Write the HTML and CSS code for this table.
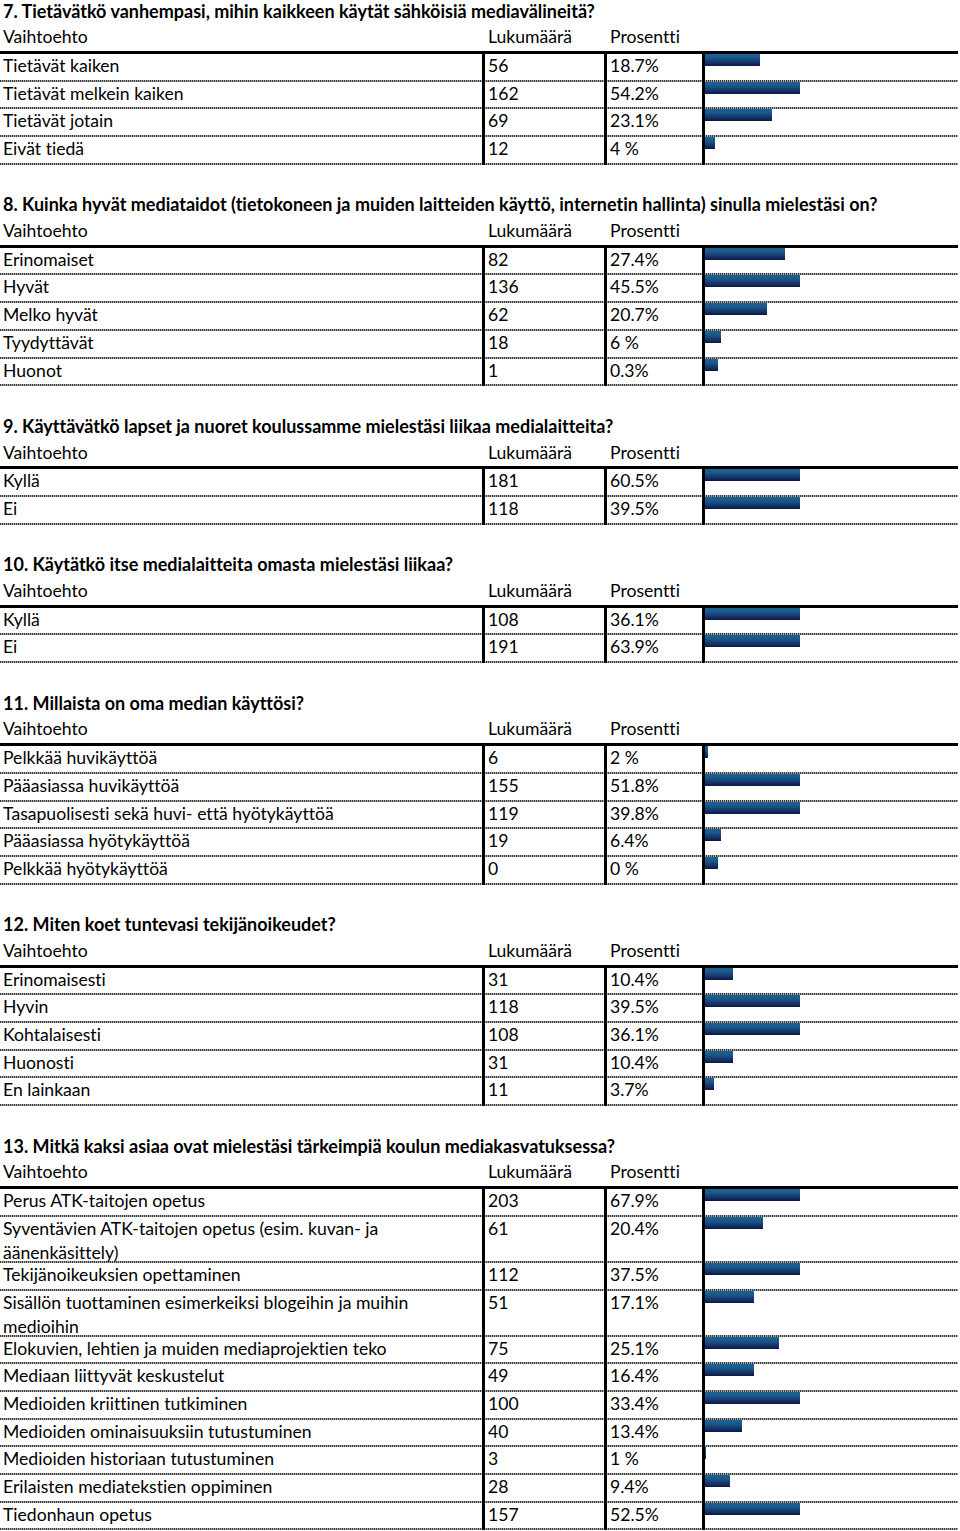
FILE: index.html
```html
<!DOCTYPE html>
<html lang="fi">
<head>
<meta charset="utf-8">
<title>Kyselyn tulokset</title>
<link rel="stylesheet" href="styles.css">
</head>
<body>
<div class="page">

<section class="q">
  <h2 class="q-title">7. Tietävätkö vanhempasi, mihin kaikkeen käytät sähköisiä mediavälineitä?</h2>
  <div class="line head"><span class="c c-label">Vaihtoehto</span><span class="c c-num">Lukumäärä</span><span class="c c-pct">Prosentti</span><span class="c c-bar"></span></div>
  <div class="rows">
    <div class="line row"><span class="c c-label">Tietävät kaiken</span><span class="c c-num">56</span><span class="c c-pct">18.7%</span><span class="c c-bar"><i class="bar" style="width:55px"></i></span></div>
    <div class="line row"><span class="c c-label">Tietävät melkein kaiken</span><span class="c c-num">162</span><span class="c c-pct">54.2%</span><span class="c c-bar"><i class="bar" style="width:95px"></i></span></div>
    <div class="line row"><span class="c c-label">Tietävät jotain</span><span class="c c-num">69</span><span class="c c-pct">23.1%</span><span class="c c-bar"><i class="bar" style="width:67px"></i></span></div>
    <div class="line row"><span class="c c-label">Eivät tiedä</span><span class="c c-num">12</span><span class="c c-pct">4 %</span><span class="c c-bar"><i class="bar" style="width:10px"></i></span></div>
  </div>
</section>

<section class="q">
  <h2 class="q-title">8. Kuinka hyvät mediataidot (tietokoneen ja muiden laitteiden käyttö, internetin hallinta) sinulla mielestäsi on?</h2>
  <div class="line head"><span class="c c-label">Vaihtoehto</span><span class="c c-num">Lukumäärä</span><span class="c c-pct">Prosentti</span><span class="c c-bar"></span></div>
  <div class="rows">
    <div class="line row"><span class="c c-label">Erinomaiset</span><span class="c c-num">82</span><span class="c c-pct">27.4%</span><span class="c c-bar"><i class="bar" style="width:80px"></i></span></div>
    <div class="line row"><span class="c c-label">Hyvät</span><span class="c c-num">136</span><span class="c c-pct">45.5%</span><span class="c c-bar"><i class="bar" style="width:95px"></i></span></div>
    <div class="line row"><span class="c c-label">Melko hyvät</span><span class="c c-num">62</span><span class="c c-pct">20.7%</span><span class="c c-bar"><i class="bar" style="width:62px"></i></span></div>
    <div class="line row"><span class="c c-label">Tyydyttävät</span><span class="c c-num">18</span><span class="c c-pct">6 %</span><span class="c c-bar"><i class="bar" style="width:16px"></i></span></div>
    <div class="line row"><span class="c c-label">Huonot</span><span class="c c-num">1</span><span class="c c-pct">0.3%</span><span class="c c-bar"><i class="bar" style="width:13px"></i></span></div>
  </div>
</section>

<section class="q">
  <h2 class="q-title">9. Käyttävätkö lapset ja nuoret koulussamme mielestäsi liikaa medialaitteita?</h2>
  <div class="line head"><span class="c c-label">Vaihtoehto</span><span class="c c-num">Lukumäärä</span><span class="c c-pct">Prosentti</span><span class="c c-bar"></span></div>
  <div class="rows">
    <div class="line row"><span class="c c-label">Kyllä</span><span class="c c-num">181</span><span class="c c-pct">60.5%</span><span class="c c-bar"><i class="bar" style="width:95px"></i></span></div>
    <div class="line row"><span class="c c-label">Ei</span><span class="c c-num">118</span><span class="c c-pct">39.5%</span><span class="c c-bar"><i class="bar" style="width:95px"></i></span></div>
  </div>
</section>

<section class="q">
  <h2 class="q-title">10. Käytätkö itse medialaitteita omasta mielestäsi liikaa?</h2>
  <div class="line head"><span class="c c-label">Vaihtoehto</span><span class="c c-num">Lukumäärä</span><span class="c c-pct">Prosentti</span><span class="c c-bar"></span></div>
  <div class="rows">
    <div class="line row"><span class="c c-label">Kyllä</span><span class="c c-num">108</span><span class="c c-pct">36.1%</span><span class="c c-bar"><i class="bar" style="width:95px"></i></span></div>
    <div class="line row"><span class="c c-label">Ei</span><span class="c c-num">191</span><span class="c c-pct">63.9%</span><span class="c c-bar"><i class="bar" style="width:95px"></i></span></div>
  </div>
</section>

<section class="q">
  <h2 class="q-title">11. Millaista on oma median käyttösi?</h2>
  <div class="line head"><span class="c c-label">Vaihtoehto</span><span class="c c-num">Lukumäärä</span><span class="c c-pct">Prosentti</span><span class="c c-bar"></span></div>
  <div class="rows">
    <div class="line row"><span class="c c-label">Pelkkää huvikäyttöä</span><span class="c c-num">6</span><span class="c c-pct">2 %</span><span class="c c-bar"><i class="bar" style="width:3px"></i></span></div>
    <div class="line row"><span class="c c-label">Pääasiassa huvikäyttöä</span><span class="c c-num">155</span><span class="c c-pct">51.8%</span><span class="c c-bar"><i class="bar" style="width:95px"></i></span></div>
    <div class="line row"><span class="c c-label">Tasapuolisesti sekä huvi- että hyötykäyttöä</span><span class="c c-num">119</span><span class="c c-pct">39.8%</span><span class="c c-bar"><i class="bar" style="width:95px"></i></span></div>
    <div class="line row"><span class="c c-label">Pääasiassa hyötykäyttöä</span><span class="c c-num">19</span><span class="c c-pct">6.4%</span><span class="c c-bar"><i class="bar" style="width:16px"></i></span></div>
    <div class="line row"><span class="c c-label">Pelkkää hyötykäyttöä</span><span class="c c-num">0</span><span class="c c-pct">0 %</span><span class="c c-bar"><i class="bar" style="width:13px"></i></span></div>
  </div>
</section>

<section class="q">
  <h2 class="q-title">12. Miten koet tuntevasi tekijänoikeudet?</h2>
  <div class="line head"><span class="c c-label">Vaihtoehto</span><span class="c c-num">Lukumäärä</span><span class="c c-pct">Prosentti</span><span class="c c-bar"></span></div>
  <div class="rows">
    <div class="line row"><span class="c c-label">Erinomaisesti</span><span class="c c-num">31</span><span class="c c-pct">10.4%</span><span class="c c-bar"><i class="bar" style="width:28px"></i></span></div>
    <div class="line row"><span class="c c-label">Hyvin</span><span class="c c-num">118</span><span class="c c-pct">39.5%</span><span class="c c-bar"><i class="bar" style="width:95px"></i></span></div>
    <div class="line row"><span class="c c-label">Kohtalaisesti</span><span class="c c-num">108</span><span class="c c-pct">36.1%</span><span class="c c-bar"><i class="bar" style="width:95px"></i></span></div>
    <div class="line row"><span class="c c-label">Huonosti</span><span class="c c-num">31</span><span class="c c-pct">10.4%</span><span class="c c-bar"><i class="bar" style="width:28px"></i></span></div>
    <div class="line row"><span class="c c-label">En lainkaan</span><span class="c c-num">11</span><span class="c c-pct">3.7%</span><span class="c c-bar"><i class="bar" style="width:9px"></i></span></div>
  </div>
</section>

<section class="q">
  <h2 class="q-title">13. Mitkä kaksi asiaa ovat mielestäsi tärkeimpiä koulun mediakasvatuksessa?</h2>
  <div class="line head"><span class="c c-label">Vaihtoehto</span><span class="c c-num">Lukumäärä</span><span class="c c-pct">Prosentti</span><span class="c c-bar"></span></div>
  <div class="rows">
    <div class="line row"><span class="c c-label">Perus ATK-taitojen opetus</span><span class="c c-num">203</span><span class="c c-pct">67.9%</span><span class="c c-bar"><i class="bar" style="width:95px"></i></span></div>
    <div class="line row row--tall"><span class="c c-label">Syventävien ATK-taitojen opetus (esim. kuvan- ja<br>äänenkäsittely)</span><span class="c c-num">61</span><span class="c c-pct">20.4%</span><span class="c c-bar"><i class="bar" style="width:58px"></i></span></div>
    <div class="line row"><span class="c c-label">Tekijänoikeuksien opettaminen</span><span class="c c-num">112</span><span class="c c-pct">37.5%</span><span class="c c-bar"><i class="bar" style="width:95px"></i></span></div>
    <div class="line row row--tall"><span class="c c-label">Sisällön tuottaminen esimerkeiksi blogeihin ja muihin<br>medioihin</span><span class="c c-num">51</span><span class="c c-pct">17.1%</span><span class="c c-bar"><i class="bar" style="width:49px"></i></span></div>
    <div class="line row"><span class="c c-label">Elokuvien, lehtien ja muiden mediaprojektien teko</span><span class="c c-num">75</span><span class="c c-pct">25.1%</span><span class="c c-bar"><i class="bar" style="width:74px"></i></span></div>
    <div class="line row"><span class="c c-label">Mediaan liittyvät keskustelut</span><span class="c c-num">49</span><span class="c c-pct">16.4%</span><span class="c c-bar"><i class="bar" style="width:49px"></i></span></div>
    <div class="line row"><span class="c c-label">Medioiden kriittinen tutkiminen</span><span class="c c-num">100</span><span class="c c-pct">33.4%</span><span class="c c-bar"><i class="bar" style="width:95px"></i></span></div>
    <div class="line row"><span class="c c-label">Medioiden ominaisuuksiin tutustuminen</span><span class="c c-num">40</span><span class="c c-pct">13.4%</span><span class="c c-bar"><i class="bar" style="width:37px"></i></span></div>
    <div class="line row"><span class="c c-label">Medioiden historiaan tutustuminen</span><span class="c c-num">3</span><span class="c c-pct">1 %</span><span class="c c-bar"><i class="bar" style="width:1px"></i></span></div>
    <div class="line row"><span class="c c-label">Erilaisten mediatekstien oppiminen</span><span class="c c-num">28</span><span class="c c-pct">9.4%</span><span class="c c-bar"><i class="bar" style="width:25px"></i></span></div>
    <div class="line row"><span class="c c-label">Tiedonhaun opetus</span><span class="c c-num">157</span><span class="c c-pct">52.5%</span><span class="c c-bar"><i class="bar" style="width:95px"></i></span></div>
  </div>
</section>

</div>
</body>
</html>
```

FILE: styles.css
```css
html, body {
  margin: 0;
  padding: 0;
  background: #fff;
}

.page {
  width: 958px;
  margin-top: -1.4px;
  font-family: Lato, "Open Sans", "Liberation Sans", sans-serif;
  font-size: 17.6px;
  font-variant-ligatures: none;
  color: #000;
}

.q {
  margin-bottom: 27.7px;
}

.q-title {
  margin: 0;
  height: 27.7px;
  line-height: 24px;
  padding-left: 3px;
  font-size: 18px;
  font-weight: 700;
  white-space: nowrap;
}

.line {
  display: grid;
  grid-template-columns: 482px 122px 98px 256px;
  box-sizing: border-box;
}

.c {
  display: block;
  padding-left: 3px;
  box-sizing: border-box;
  white-space: nowrap;
}

.c-num,
.c-pct,
.c-bar {
  border-left: 3px solid transparent;
}

.head {
  height: 24.7px;
  line-height: 22px;
}

.rows {
  border-top: 3px solid #000;
}

.row {
  height: 27.7px;
  line-height: 24px;
  background-image: repeating-linear-gradient(90deg, #3e3e3e 0 1px, #a8a8a8 1px 2px);
  background-size: 100% 2px;
  background-position: left bottom;
  background-repeat: no-repeat;
}

.row--tall {
  height: 46px;
}

.row .c-num,
.row .c-pct,
.row .c-bar {
  border-left-color: #000;
}

.row .c-bar {
  padding-left: 0;
}

.bar {
  display: block;
  height: 12px;
  background: linear-gradient(to bottom, #1d6294 0%, #1a5a8b 30%, #14346a 70%, #0e1843 100%);
}
```
